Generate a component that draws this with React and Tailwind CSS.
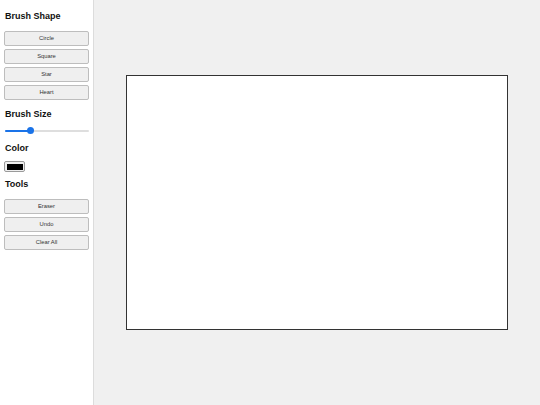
export default function App() {
  const shapes = ['Circle', 'Square', 'Star', 'Heart'];
  const tools = ['Eraser', 'Undo', 'Clear All'];

  const Btn = ({ label }) => (
    <button className="h-[15px] w-full rounded-[2px] border border-[#bdbdbd] bg-[#efefef] text-[5.8px] leading-none text-[#333]">
      {label}
    </button>
  );

  const Heading = ({ children, className = '' }) => (
    <h3 className={`h-[12px] text-[9px] font-bold leading-[12px] text-[#111] ${className}`}>{children}</h3>
  );

  return (
    <div className="flex h-[405px] w-[540px] font-['Liberation_Sans',Arial,sans-serif]">
      {/* Sidebar */}
      <aside className="flex w-[94px] shrink-0 flex-col border-r border-[#dcdcdc] bg-white px-[4px] pt-[10px]">
        <Heading className="pl-[1px]">Brush Shape</Heading>
        <div className="mt-[9px] flex w-[85px] flex-col gap-[3px]">
          {shapes.map((s) => (
            <Btn key={s} label={s} />
          ))}
        </div>

        <Heading className="mt-[8px] pl-[1px]">Brush Size</Heading>
        <div className="relative mt-[7px] ml-[1px] h-[7px] w-[84px]">
          <div className="absolute left-0 right-0 top-[2.5px] h-[2px] rounded-full bg-[#dedede]" />
          <div className="absolute left-0 top-[2.5px] h-[2px] w-[26px] rounded-full bg-[#1a73e8]" />
          <div className="absolute left-[22px] top-0 h-[7px] w-[7px] rounded-full bg-[#1a73e8]" />
        </div>

        <Heading className="mt-[8px] pl-[1px]">Color</Heading>
        <div className="mt-[7px] flex h-[11px] w-[21px] items-center justify-center rounded-[2px] border border-[#9a9a9a] bg-[#efefef]">
          <div className="h-[6px] w-[16px] bg-black" />
        </div>

        <Heading className="mt-[6px] pl-[1px]">Tools</Heading>
        <div className="mt-[9px] flex w-[85px] flex-col gap-[3px]">
          {tools.map((t) => (
            <Btn key={t} label={t} />
          ))}
        </div>
      </aside>

      {/* Main */}
      <main className="flex flex-1 items-center justify-center bg-[#f0f0f0]">
        <div className="h-[255px] w-[382px] border border-[#333] bg-white" />
      </main>
    </div>
  );
}
